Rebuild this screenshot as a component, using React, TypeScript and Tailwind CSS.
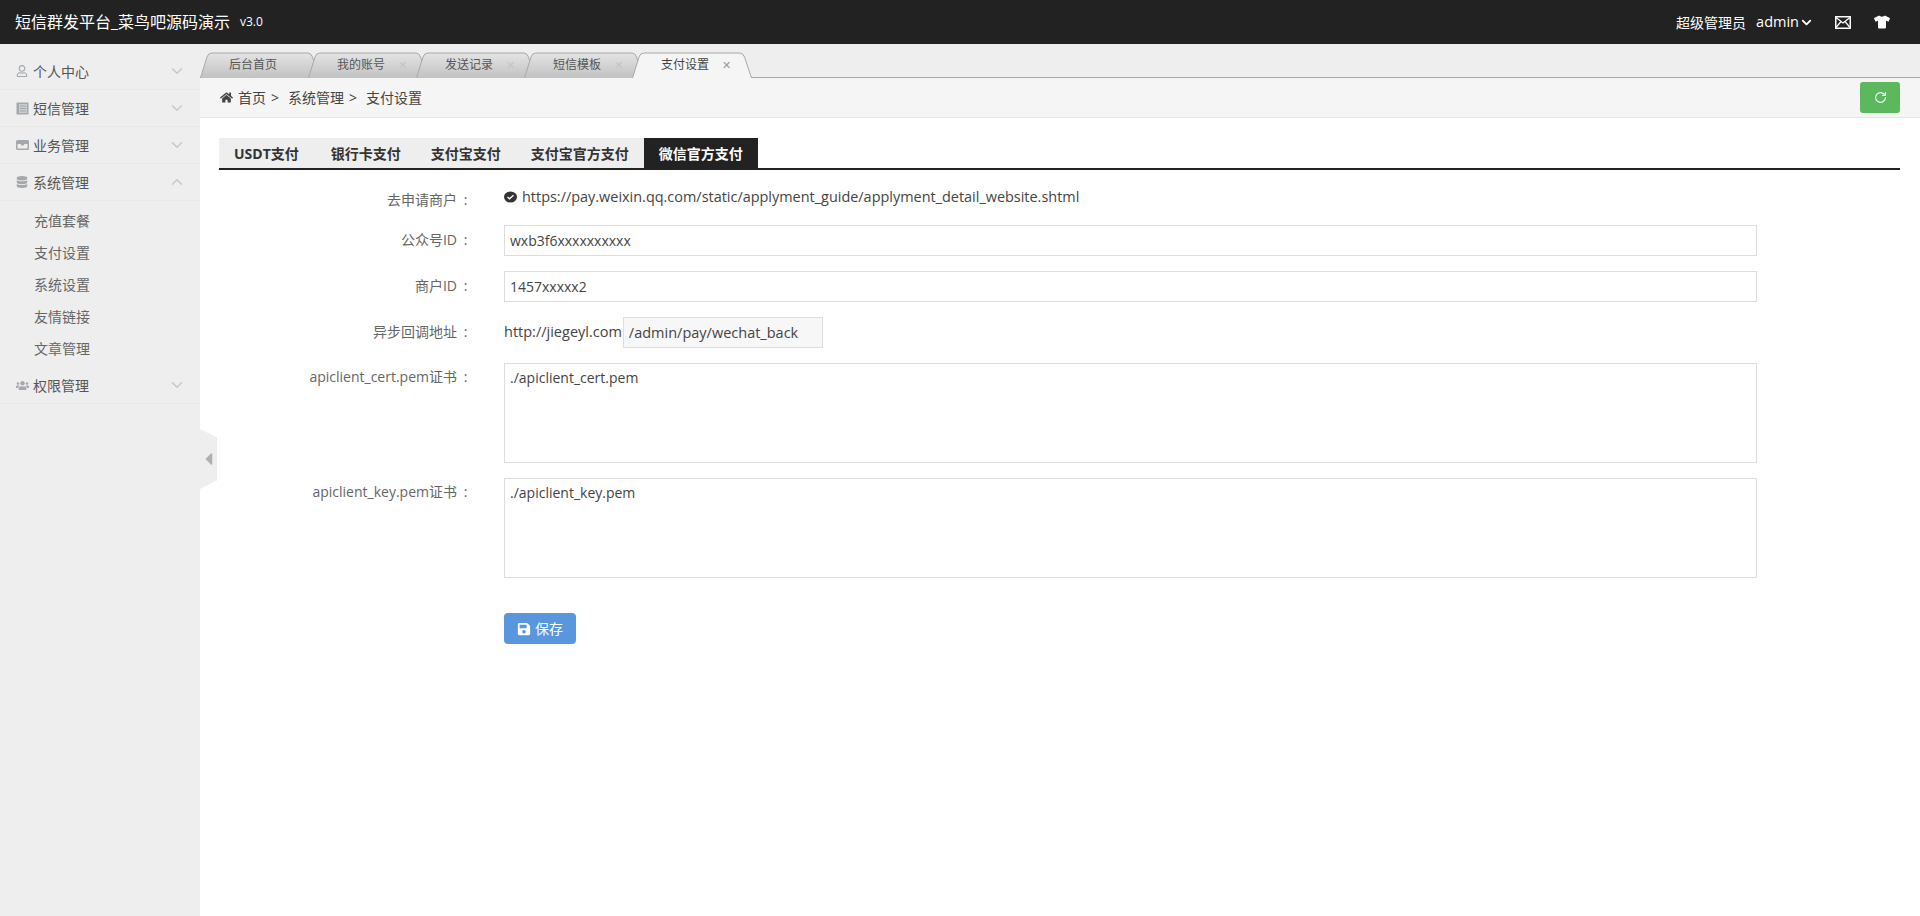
import { FaHome, FaSave, FaTshirt, FaDatabase, FaRegUser, FaUsers, FaCaretLeft } from "react-icons/fa";
import { LuChevronDown, LuChevronUp, LuRotateCw } from "react-icons/lu";

const font = "font-['Open_Sans','Noto_Sans_CJK_SC',sans-serif]";

const tabs = ["后台首页", "我的账号", "发送记录", "短信模板", "支付设置"];
const subs = ["充值套餐", "支付设置", "系统设置", "友情链接", "文章管理"];
const pays = ["USDT支付", "银行卡支付", "支付宝支付", "支付宝官方支付", "微信官方支付"];

function BookIcon() {
  return (
    <svg width="13" height="13" viewBox="0 0 13 13">
      <rect x="0.5" y="0.5" width="12" height="12" fill="#a4a8ad" />
      <rect x="3" y="2" width="8" height="9" fill="#c9ccd0" />
      <path d="M4 4h6M4 6.5h6M4 9h6" stroke="#a4a8ad" strokeWidth="1" />
    </svg>
  );
}

function TrayIcon() {
  return (
    <svg width="13" height="12" viewBox="0 0 13 12">
      <rect x="0" y="1" width="13" height="10" rx="1.5" fill="#a4a8ad" />
      <path d="M1.5 5h3l1 1.5h2L8.5 5h3v4.5h-10z" fill="#eeeeee" />
    </svg>
  );
}

function Menu({ icon, label, open }: { icon: React.ReactNode; label: string; open?: boolean }) {
  return (
    <div className="flex h-[37px] items-center border-b border-[#e8e8e8] pl-[16px] pr-[14px] text-[14px] text-[#555]">
      <span className="flex w-[17px] text-[#a4a8ad]">{icon}</span>
      <span>{label}</span>
      <span className="ml-auto text-[#c8c8c8]">
        {open ? <LuChevronUp size={18} /> : <LuChevronDown size={18} />}
      </span>
    </div>
  );
}

function Tab({ label, index }: { label: string; index: number }) {
  const active = index === 4;
  return (
    <div className={`relative flex h-[26px] w-[120px] items-center pl-[29px] text-[12px] ${index > 0 ? "-ml-[12px]" : ""} ${active ? "z-10 text-[#444]" : "text-[#555]"}`}>
      <svg className="absolute inset-0" width="120" height="26" viewBox="0 0 120 26">
        <defs>
          <linearGradient id={`t${index}`} x1="0" y1="0" x2="0" y2="1">
            <stop offset="0" stopColor={active ? "#f5f5f5" : "#e4e4e4"} />
            <stop offset="1" stopColor={active ? "#f5f5f5" : "#c2c2c2"} />
          </linearGradient>
        </defs>
        <path
          d="M0.5 26 L7 5 Q8 1 12 1 L108 1 Q111 1 112.5 5 L119.5 26"
          fill={`url(#t${index})`}
          stroke="#a8a8a8"
          strokeWidth="1"
        />
      </svg>
      <span className="relative">{label}</span>
      {index > 0 && <span className={`relative ml-[13px] text-[11px] ${active ? "text-[#999]" : "text-[#c4c4c4]"}`}>✕</span>}
    </div>
  );
}

function Row({ label, children, top = false, flush = false }: { label: string; children: React.ReactNode; top?: boolean; flush?: boolean }) {
  const nudge = top ? "pt-[3px]" : flush ? "pt-[1px]" : "pb-[3px]";
  return (
    <div className={`flex ${top ? "items-start" : "items-center"}`}>
      <label className={`flex w-[255px] shrink-0 justify-end text-[14px] text-[#666] ${nudge}`}>
        <span>{label}</span>
        <span className="w-[17px] text-center">:</span>
      </label>
      <div className="ml-[30px] min-w-0 flex-1">{children}</div>
    </div>
  );
}

const field = "w-[1253px] border border-[#ddd] bg-white px-[5px] text-[14px] text-[#444] outline-none";

export default function App() {
  return (
    <div className={`${font} flex h-[916px] w-[1920px] flex-col overflow-hidden bg-white`}>
      <header className="flex h-[44px] shrink-0 items-center bg-[#222] pl-[15px] pr-[30px] text-white">
        <span className="text-[16px]">短信群发平台_菜鸟吧源码演示</span>
        <span className="ml-[10px] text-[12px]">v3.0</span>
        <span className="ml-auto text-[14px]">超级管理员</span>
        <span className="ml-[10px] text-[14.5px]">admin</span>
        <LuChevronDown size={15} strokeWidth={3} />
        <svg width="16" height="13" viewBox="0 0 16 13" className="ml-[21px]">
          <rect x="0.75" y="0.75" width="14.5" height="11.5" fill="none" stroke="#fff" strokeWidth="1.5" />
          <path d="M1 1.5 L8 7 L15 1.5 M1 11.5 L6 5.5 M15 11.5 L10 5.5" fill="none" stroke="#fff" strokeWidth="1.2" />
        </svg>
        <FaTshirt size={16} className="ml-[23px]" />
      </header>
      <div className="flex min-h-0 flex-1">
        <aside className="relative w-[200px] shrink-0 bg-[#eee] pt-[9px]">
          <Menu icon={<FaRegUser size={12} />} label="个人中心" />
          <Menu icon={<BookIcon />} label="短信管理" />
          <Menu icon={<TrayIcon />} label="业务管理" />
          <Menu icon={<FaDatabase size={12} />} label="系统管理" open />
          <div className="py-[3px]">
            {subs.map((s) => (
              <div key={s} className="flex h-[32px] items-center pl-[34px] text-[14px] text-[#666]">{s}</div>
            ))}
          </div>
          <Menu icon={<FaUsers size={13} />} label="权限管理" />
          <div className="absolute left-[200px] top-[385px] flex h-[60px] w-[17px] items-center justify-center bg-[#eee] text-[#b0b0b0] [clip-path:polygon(0_0,100%_14%,100%_86%,0_100%)]">
            <FaCaretLeft size={20} />
          </div>
        </aside>
        <main className="min-w-0 flex-1">
          <div className="flex h-[34px] items-end border-b border-[#aaa] bg-[#eee]">
            <div className="-mb-px flex">
              {tabs.map((t, i) => <Tab key={t} label={t} index={i} />)}
            </div>
          </div>
          <div className="flex h-[40px] items-center border-b border-[#e6e6e6] bg-[#f5f5f5] px-[20px] text-[14px] text-[#444]">
            <FaHome size={13} />
            <span className="ml-[5px]">首页</span>
            <span className="ml-[5px]">&gt;</span>
            <span className="ml-[9px]">系统管理</span>
            <span className="ml-[5px]">&gt;</span>
            <span className="ml-[9px]">支付设置</span>
            <button className="ml-auto flex h-[31px] w-[40px] items-center justify-center rounded-[3px] bg-[#5cb85c] text-white">
              <LuRotateCw size={13} />
            </button>
          </div>
          <div className="pl-[19px] pr-[20px] pt-[20px]">
            <div className="flex h-[32px] border-b-2 border-[#222] bg-white">
              {pays.map((p, i) => (
                <div key={p} className={`flex items-center text-[14px] font-bold ${i === 0 ? "pl-[15px] pr-[17px]" : "px-[15px]"} ${i === 4 ? "bg-[#222] text-white" : "bg-[#eee] text-[#333]"}`}>{p}</div>
              ))}
            </div>
            <div className="mt-[15px] flex flex-col gap-[15px]">
              <div className="flex h-[25px] items-center pt-[2px]">
                <Row label="去申请商户" flush>
                  <div className="flex items-center pb-[3px] text-[14.45px] text-[#444]">
                    <svg width="13" height="12" viewBox="0 0 13 12">
                      <ellipse cx="6.5" cy="6" rx="6.5" ry="5.5" fill="#333" />
                      <path d="M3.5 6 L5.5 7.8 L9.5 4.2" fill="none" stroke="#fff" strokeWidth="1.3" />
                    </svg>
                    <span className="ml-[5px]">https://pay.weixin.qq.com/static/applyment_guide/applyment_detail_website.shtml</span>
                  </div>
                </Row>
              </div>
              <Row label="公众号ID">
                <input readOnly value="wxb3f6xxxxxxxxxx" className={`${field} block h-[31px]`} />
              </Row>
              <Row label="商户ID">
                <input readOnly value="1457xxxxx2" className={`${field} block h-[31px]`} />
              </Row>
              <Row label="异步回调地址">
                <div className="flex items-center text-[14.5px] text-[#444]">
                  <span className="pb-[1px]">http://jiegeyl.com</span>
                  <input readOnly value="/admin/pay/wechat_back" className="ml-[1px] block h-[31px] w-[200px] border border-[#ddd] bg-[#f7f7f7] px-[5px] text-[14.5px] text-[#444] outline-none" />
                </div>
              </Row>
              <Row label="apiclient_cert.pem证书" top>
                <textarea readOnly value="./apiclient_cert.pem" className={`${field} block h-[100px] resize-none py-[3px] text-[14.2px]`} />
              </Row>
              <Row label="apiclient_key.pem证书" top>
                <textarea readOnly value="./apiclient_key.pem" className={`${field} block h-[100px] resize-none py-[3px] text-[14.2px]`} />
              </Row>
              <div className="ml-[285px] mt-[20px]">
                <button className="flex h-[31px] w-[72px] items-center justify-center rounded-[4px] bg-[#5897dd] text-[14px] text-white">
                  <FaSave size={14} />
                  <span className="ml-[4px]">保存</span>
                </button>
              </div>
            </div>
          </div>
        </main>
      </div>
    </div>
  );
}
